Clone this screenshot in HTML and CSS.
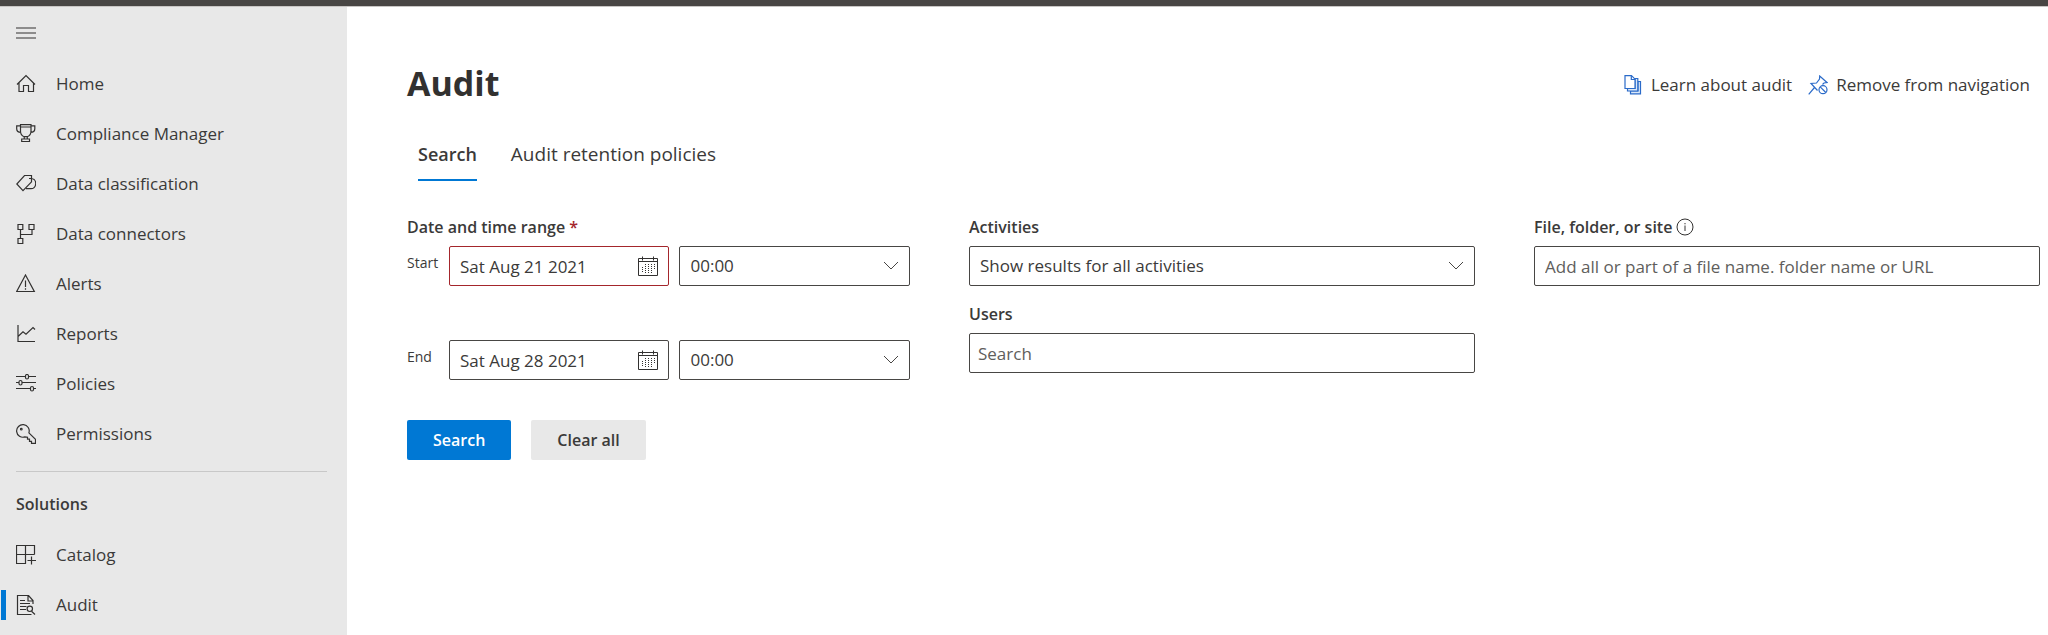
FILE: index.html
```html
<!DOCTYPE html>
<html lang="en">
<head>
<meta charset="utf-8">
<title>Audit</title>
<link rel="stylesheet" href="styles.css">
</head>
<body>
<header class="topbar"></header>
<div class="shell">
  <nav class="sidebar" aria-label="Main">
    <button class="menu-toggle" type="button" aria-label="Toggle navigation">
      <svg class="icon" viewBox="0 0 20 20"><path d="M0 5h20M0 10h20M0 15h20"/></svg>
    </button>
    <ul class="nav-list">
      <li><a class="nav-link" href="#home"><svg class="icon" viewBox="0 0 20 20"><path d="M1 10.500 10 1.500l9 9M3 9v8.500h4.500v-6h5v6H17.500V9"/></svg>Home</a></li>
      <li><a class="nav-link" href="#compliance"><svg class="icon" viewBox="0 0 20 20"><path d="M4.500 .700h10.500v6.500c0 2.800-1.800 4.800-3.700 5.500v2.300h2.200v2.500H5.700v-2.500h2.500v-2.300C6.300 12 4.500 10 4.500 7.200zM4.500 3h10.500M4.500 1.800H.700v3c0 2.400 1.800 3.700 4.300 3.700M15 1.800h3.800v3c0 2.400-1.800 3.700-4.300 3.700M8.200 12.700h3.100M8 15h3.500"/></svg>Compliance Manager</a></li>
      <li><a class="nav-link" href="#classification"><svg class="icon" viewBox="0 0 20 20"><path d="M8.500 1.500h7v6.300L7 16.700.800 10zM13 4.500h2.500c3 .500 4.300 3 4.200 5.200-.200 3-2.200 5-4.700 5H10M15.500 7.800 9 14.700"/></svg>Data classification</a></li>
      <li><a class="nav-link" href="#connectors"><svg class="icon" viewBox="0 0 20 20"><path d="M2 .500h4.800v5H2zM13 .500h5v5h-5zM2 14.500h4.800v5H2zM4.500 5.500v9M4.500 10.500h11.500v-5"/></svg>Data connectors</a></li>
      <li><a class="nav-link" href="#alerts"><svg class="icon" viewBox="0 0 20 20"><path d="M9.500 1 18.300 17.500H.700zM9.500 6.500v6.500M9.500 14.200v1.500"/></svg>Alerts</a></li>
      <li><a class="nav-link" href="#reports"><svg class="icon" viewBox="0 0 20 20"><path d="M2 1v16.500h17M2 12.500l5-4.800 3 2.500 7-6.700 2 2"/></svg>Reports</a></li>
      <li><a class="nav-link" href="#policies"><svg class="icon" viewBox="0 0 20 20"><path d="M0 2.500h9.500M12.500 2.500h7.500M0 8.500h3M6 8.500h14M0 14.500h14.500M17.500 14.500h2.500"/><rect x="9.500" y=".5" width="3" height="4.500" rx="1.500"/><rect x="3" y="6.500" width="3" height="4.500" rx="1.500"/><rect x="14.500" y="12.500" width="3" height="4.500" rx="1.500"/></svg>Policies</a></li>
      <li><a class="nav-link" href="#permissions"><svg class="icon" viewBox="0 0 20 20"><path d="M12.900 8.900a6.300 6.300 0 1 0-4 4l2.600.300v2h2v2.200h2v2h4v-4z"/><circle cx="5.300" cy="5.200" r=".8"/></svg>Permissions</a></li>
    </ul>
    <hr class="divider">
    <h2 class="nav-heading">Solutions</h2>
    <ul class="nav-list">
      <li><a class="nav-link" href="#catalog"><svg class="icon" viewBox="0 0 20 20"><path d="M18.500 9.500v-9H.5v18h9v-18M.5 9.500h18M15.500 11.500v8M11.500 15.500h8.500"/></svg>Catalog</a></li>
      <li><a class="nav-link nav-link-current" href="#audit" aria-current="page"><svg class="icon" viewBox="0 0 20 20"><path d="M17 9V5.500L12.500.5h-11v19h14M12 .500v5.500h5M4 5.500h5M4 8.500h10M4 11.500h6.500M4 14.500h6M15.500 16.300l3.500 3.200"/><circle cx="13.800" cy="13.800" r="2.700"/></svg>Audit</a></li>
    </ul>
  </nav>
  <main class="content">
    <div class="page-head">
      <h1 class="page-title">Audit</h1>
      <div class="page-actions">
        <a class="action" href="#learn"><svg class="icon icon-blue" viewBox="0 0 20 20"><path class="sheet" d="M15 6.500h2.500v12.300H7.500V16H15z"/><path class="sheet" d="M12 3.500h2.800v12.500H4.500v-2.500H12z"/><path class="sheet sheet-front" d="M2 .700h6.500L12 4.200v9.300H2z"/><path d="M8.300 .700v3.800H12"/></svg>Learn about audit</a>
        <a class="action" href="#remove"><svg class="icon icon-blue" viewBox="0 0 20 20"><path d="M.700 19.300 6.500 12.500M9.500 15.500 3 8.500l5.500-.500L11.500 4l.200-3 7.300 6.500-3 .500-1.500 1.500"/><circle cx="15" cy="14.700" r="4"/><path d="m12.200 11.900 5.600 5.600"/></svg>Remove from navigation</a>
      </div>
    </div>
    <div class="tabs" role="tablist">
      <button class="tab tab-selected" type="button" role="tab" aria-selected="true">Search</button>
      <button class="tab" type="button" role="tab" aria-selected="false">Audit retention policies</button>
    </div>
    <form class="search-form">
      <div class="filters">
        <fieldset class="range">
          <legend class="label">Date and time range <span class="required">*</span></legend>
          <div class="range-row">
            <label class="range-label" for="start-date">Start</label>
            <div class="field">
              <input class="box box-required" id="start-date" type="text" value="Sat Aug 21 2021">
              <svg class="icon field-icon" viewBox="0 0 20 20"><path d="M.5 2.500h19v17H.5zM.5 5.500h19M4.500 .5v4M15.500 .5v4"/><path class="dots" d="M7.500 8v9M10.500 8v9M13.500 8v9M16.500 8v6M4.500 11v6"/></svg>
            </div>
            <div class="field">
              <select class="box" id="start-time" aria-label="Start time"><option>00:00</option></select>
              <svg class="chevron" viewBox="0 0 16 10"><path d="m1 1 7 7 7-7"/></svg>
            </div>
          </div>
          <div class="range-row">
            <label class="range-label" for="end-date">End</label>
            <div class="field">
              <input class="box" id="end-date" type="text" value="Sat Aug 28 2021">
              <svg class="icon field-icon" viewBox="0 0 20 20"><path d="M.5 2.500h19v17H.5zM.5 5.500h19M4.500 .5v4M15.500 .5v4"/><path class="dots" d="M7.500 8v9M10.500 8v9M13.500 8v9M16.500 8v6M4.500 11v6"/></svg>
            </div>
            <div class="field">
              <select class="box" id="end-time" aria-label="End time"><option>00:00</option></select>
              <svg class="chevron" viewBox="0 0 16 10"><path d="m1 1 7 7 7-7"/></svg>
            </div>
          </div>
        </fieldset>
        <div class="filter-column">
          <div class="filter">
            <label class="label" for="activities">Activities</label>
            <div class="field">
              <select class="box" id="activities"><option>Show results for all activities</option></select>
              <svg class="chevron" viewBox="0 0 16 10"><path d="m1 1 7 7 7-7"/></svg>
            </div>
          </div>
          <div class="filter">
            <label class="label" for="users">Users</label>
            <input class="box box-users" id="users" type="text" placeholder="Search">
          </div>
        </div>
        <div class="filter">
          <label class="label" for="file">File, folder, or site
            <svg class="info" viewBox="0 0 18 18"><circle cx="9" cy="9" r="8"/><path d="M9 7.500v5.500M9 5v1.300"/></svg>
          </label>
          <input class="box" id="file" type="text" placeholder="Add all or part of a file name. folder name or URL">
        </div>
      </div>
      <div class="buttons">
        <button class="btn btn-primary" type="button">Search</button>
        <button class="btn" type="reset">Clear all</button>
      </div>
    </form>
  </main>
</div>
</body>
</html>
```

FILE: styles.css
```css
* {
  box-sizing: border-box;
}

body {
  margin: 0;
  min-height: 100vh;
  display: flex;
  flex-direction: column;
  background: #fff;
  color: #3b3a39;
  font-family: "Open Sans", "Noto Sans", sans-serif;
  font-size: 17px;
  line-height: 24px;
}

button,
input,
select {
  font: inherit;
  color: inherit;
}

a {
  color: inherit;
  text-decoration: none;
}

.icon {
  width: 20px;
  height: 20px;
  flex: none;
  fill: none;
  stroke: #323130;
  stroke-width: 1.2;
}

.icon-blue {
  stroke: #2b6bc9;
}

.sheet {
  fill: #dbe8f8;
}

.sheet-front {
  fill: #fff;
}

.topbar {
  height: 7px;
  background: #484644;
  border-bottom: 1px solid #c8c6c4;
}

.shell {
  flex: 1;
  display: flex;
}

.sidebar {
  width: 347px;
  flex: none;
  background: #e8e8e8;
}

.menu-toggle {
  display: flex;
  align-items: center;
  height: 52px;
  padding: 0 16px;
  border: 0;
  background: none;
}

.nav-list {
  margin: 0;
  padding: 0;
  list-style: none;
}

.nav-link {
  display: flex;
  align-items: center;
  gap: 20px;
  height: 50px;
  padding: 0 16px;
  position: relative;
}

.nav-link-current::before {
  content: "";
  position: absolute;
  left: 1px;
  top: 10px;
  width: 5px;
  height: 30px;
  background: #0078d4;
}

.divider {
  height: 1px;
  margin: 12px 20px 0 16px;
  border: 0;
  background: #c8c8c8;
}

.nav-heading {
  margin: 0;
  padding: 20px 16px 14px;
  font-size: 16px;
  font-weight: 600;
}

.content {
  flex: 1;
  min-width: 0;
  padding: 52px 8px 40px 60px;
}

.page-head {
  display: flex;
  justify-content: space-between;
  align-items: center;
  padding-right: 10px;
}

.page-title {
  margin: 0;
  color: #323130;
  font-size: 34px;
  line-height: 48px;
  font-weight: 700;
}

.page-actions {
  display: flex;
  gap: 16px;
  padding-top: 4px;
}

.action {
  display: flex;
  align-items: center;
  gap: 8px;
}

.tabs {
  display: flex;
  gap: 34px;
  margin-top: 22px;
  padding-left: 11px;
}

.tab {
  height: 52px;
  padding: 0;
  border: 0;
  border-bottom: 2px solid transparent;
  background: none;
  font-size: 19px;
}

.tab-selected {
  border-bottom-color: #0078d4;
  font-size: 18px;
  font-weight: 600;
}

.filters {
  display: grid;
  grid-template-columns: minmax(0, 503fr) minmax(0, 506fr) minmax(0, 506fr);
  gap: 59px;
  margin-top: 34px;
}

.range {
  min-width: 0;
  margin: 0;
  padding: 0;
  border: 0;
}

.label {
  display: flex;
  align-items: center;
  gap: 4px;
  height: 24px;
  margin-bottom: 7px;
  padding: 0;
  font-size: 16px;
  font-weight: 600;
}

.required {
  color: #a4262c;
}

.range-row {
  display: grid;
  grid-template-columns: 32px 220fr 230fr;
  gap: 10px;
}

.range-row + .range-row {
  margin-top: 54px;
}

.range-label {
  font-size: 14px;
  line-height: 34px;
}

.field {
  position: relative;
}

.box {
  display: block;
  width: 100%;
  height: 40px;
  padding: 0 10px;
  border: 1px solid #484644;
  border-radius: 2px;
  background: #fff;
  appearance: none;
}

.box-required {
  border-color: #a4262c;
}

.box-users {
  padding: 0 8px;
}

.box::placeholder {
  color: #605e5c;
  opacity: 1;
}

.field-icon {
  position: absolute;
  right: 11px;
  top: 10px;
  stroke-width: 1;
}

.dots {
  stroke-dasharray: 1 1;
}

.chevron {
  position: absolute;
  right: 11px;
  top: 15px;
  width: 16px;
  height: 10px;
  fill: none;
  stroke: #484644;
  pointer-events: none;
}

.info {
  width: 18px;
  height: 18px;
  fill: none;
  stroke: #323130;
}

.filter-column {
  display: flex;
  flex-direction: column;
  gap: 16px;
}

.buttons {
  display: flex;
  gap: 20px;
  margin-top: 40px;
}

.btn {
  height: 40px;
  padding: 0 26px;
  border: 0;
  border-radius: 2px;
  background: #e8e8e8;
  font-size: 16px;
  font-weight: 600;
}

.btn-primary {
  background: #0078d4;
  color: #fff;
}
```
